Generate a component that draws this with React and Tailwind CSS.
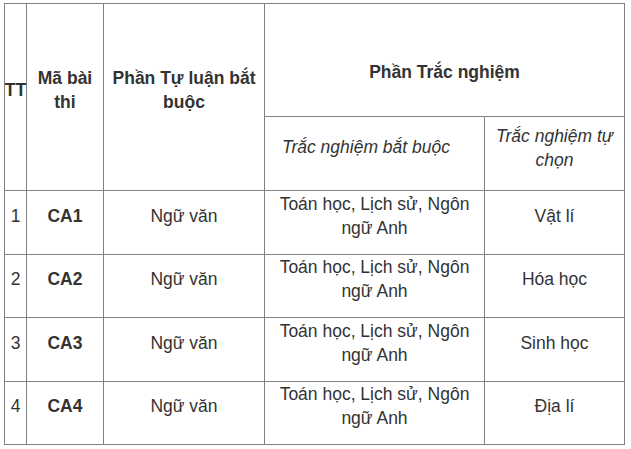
export default function App() {
  const rows = [
    { n: "1", ca: "CA1", opt: "Vật lí" },
    { n: "2", ca: "CA2", opt: "Hóa học" },
    { n: "3", ca: "CA3", opt: "Sinh học" },
    { n: "4", ca: "CA4", opt: "Địa lí" },
  ];
  const cell = "bg-white flex items-center justify-center text-center";
  return (
    <div className="bg-white w-[631px] h-[449px] pt-[3px] pl-[4px] text-[17.5px] leading-[24px] text-[#333333] font-['Liberation_Sans',Arial,sans-serif]">
      <div className="grid w-fit grid-cols-[21px_76px_160px_219px_139px] grid-rows-[112px_73px_63px_62px_63px_62px] gap-px bg-[#808080] p-px">
        <div className={`${cell} row-span-2 pb-[14px] font-bold`}>TT</div>
        <div className={`${cell} row-span-2 pb-[14px] px-[4px] font-bold`}>Mã bài thi</div>
        <div className={`${cell} row-span-2 pb-[14px] px-[4px] font-bold`}>Phần Tự luận bắt buộc</div>
        <div className={`${cell} col-span-2 pt-[24px] font-bold`}>Phần Trắc nghiệm</div>
        <div className={`${cell} pb-[13px] pr-[17px] italic`}>Trắc nghiệm bắt buộc</div>
        <div className={`${cell} pb-[12px] px-[4px] italic`}>Trắc nghiệm tự chọn</div>
        {rows.map((r) => [
          <div key={r.n + "a"} className={`${cell} pb-[14px]`}>{r.n}</div>,
          <div key={r.n + "b"} className={`${cell} pb-[14px] font-bold`}>{r.ca}</div>,
          <div key={r.n + "c"} className={`${cell} pb-[14px]`}>Ngữ văn</div>,
          <div key={r.n + "d"} className={`${cell} pb-[14px] px-[4px]`}>Toán học, Lịch sử, Ngôn ngữ Anh</div>,
          <div key={r.n + "e"} className={`${cell} pb-[14px]`}>{r.opt}</div>,
        ])}
      </div>
    </div>
  );
}
